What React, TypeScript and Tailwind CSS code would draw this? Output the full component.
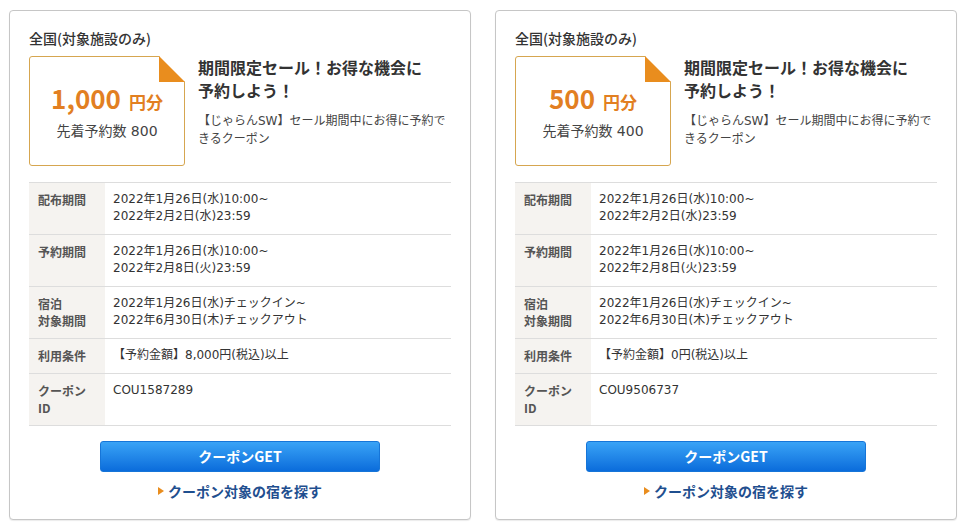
import React from 'react';

type Row = { label: string[]; value: string[] };

type Coupon = {
  amount: string;
  count: string;
  rows: Row[];
};

const coupons: Coupon[] = [
  {
    amount: '1,000',
    count: '800',
    rows: [
      { label: ['配布期間'], value: ['2022年1月26日(水)10:00~', '2022年2月2日(水)23:59'] },
      { label: ['予約期間'], value: ['2022年1月26日(水)10:00~', '2022年2月8日(火)23:59'] },
      { label: ['宿泊', '対象期間'], value: ['2022年1月26日(水)チェックイン~', '2022年6月30日(木)チェックアウト'] },
      { label: ['利用条件'], value: ['【予約金額】8,000円(税込)以上'] },
      { label: ['クーポン', 'ID'], value: ['COU1587289'] },
    ],
  },
  {
    amount: '500',
    count: '400',
    rows: [
      { label: ['配布期間'], value: ['2022年1月26日(水)10:00~', '2022年2月2日(水)23:59'] },
      { label: ['予約期間'], value: ['2022年1月26日(水)10:00~', '2022年2月8日(火)23:59'] },
      { label: ['宿泊', '対象期間'], value: ['2022年1月26日(水)チェックイン~', '2022年6月30日(木)チェックアウト'] },
      { label: ['利用条件'], value: ['【予約金額】0円(税込)以上'] },
      { label: ['クーポン', 'ID'], value: ['COU9506737'] },
    ],
  },
];

// Meiryo-like: wide latin from DejaVu, kana/kanji from Noto CJK
const wide = "font-['DejaVu_Sans','Noto_Sans_CJK_JP',sans-serif]";

function CouponCard({ coupon }: { coupon: Coupon }) {
  return (
    <div className="w-[462px] h-[510px] border border-[#c6c6c6] rounded-[4px] bg-white px-[19px] pt-[17px] shadow-[0_1px_1px_rgba(0,0,0,0.08)]">
      <div className="text-[14px] leading-[20px] font-medium text-[#333]">全国(対象施設のみ)</div>

      <div className="flex mt-[8px]">
        {/* price tag */}
        <div className="relative w-[156px] h-[110px] shrink-0 border border-[#d6a650] rounded-[3px] flex flex-col items-center justify-center">
          <svg className="absolute -top-px -right-px" width="26" height="26" viewBox="0 0 26 26">
            <polygon points="0,0 26,0 26,26" fill="#ffffff" />
            <polygon points="0,0 0,26 26,26" fill="#e98d1e" />
          </svg>
          <div className="leading-[32px] text-[#e27f22] font-bold">
            <span className="text-[26px]">{coupon.amount}</span>
            <span className="text-[17px] ml-[8px]">円分</span>
          </div>
          <div className={`mt-[3px] text-[14px] leading-[20px] text-[#444] ${wide}`}>先着予約数 {coupon.count}</div>
        </div>

        <div className="ml-[13px] w-[252px]">
          <div className="text-[16px] leading-[23px] font-bold text-[#333] whitespace-nowrap">
            期間限定セール！お得な機会に
            <br />
            予約しよう！
          </div>
          <p className={`mt-[10px] text-[12px] leading-[18px] text-[#444] whitespace-nowrap ${wide}`}>
            【じゃらんSW】セール期間中にお得に予約で
            <br />
            きるクーポン
          </p>
        </div>
      </div>

      <table className="w-full mt-[16px] border-collapse">
        <tbody>
          {coupon.rows.map((row, i) => (
            <tr key={i} className="border-t border-b border-[#dddddd]">
              <th className="w-[76px] bg-[#f5f3f0] text-left align-top pl-[9px] pt-[8px] pb-[9px] text-[12px] leading-[17px] font-bold text-[#555]">
                {row.label.map((l, j) => (
                  <div key={j}>{l}</div>
                ))}
              </th>
              <td className={`align-top pl-[8px] pt-[8px] pb-[9px] text-[12px] leading-[17px] text-[#333] ${wide}`}>
                {row.value.map((v, j) => (
                  <div key={j}>{v}</div>
                ))}
              </td>
            </tr>
          ))}
        </tbody>
      </table>

      <div className="flex flex-col items-center mt-[15px]">
        <button className="w-[280px] h-[31px] rounded-[3px] bg-gradient-to-b from-[#39a3f6] to-[#0a6cdb] text-white text-[14px] font-bold border border-[#1675d8]">
          クーポンGET
        </button>
        <a className="mt-[9px] flex items-center text-[14px] leading-[20px] font-bold text-[#1f4f8f]">
          <svg width="6" height="8" viewBox="0 0 6 8" className="mr-[4px]">
            <polygon points="0,0 6,4 0,8" fill="#e98d1e" />
          </svg>
          クーポン対象の宿を探す
        </a>
      </div>
    </div>
  );
}

export default function App() {
  return (
    <div className="w-[966px] h-[528px] bg-white font-['Noto_Sans_CJK_JP','Noto_Sans',sans-serif] pl-[9px] pt-[10px] flex gap-[24px]">
      {coupons.map((c, i) => (
        <CouponCard key={i} coupon={c} />
      ))}
    </div>
  );
}
